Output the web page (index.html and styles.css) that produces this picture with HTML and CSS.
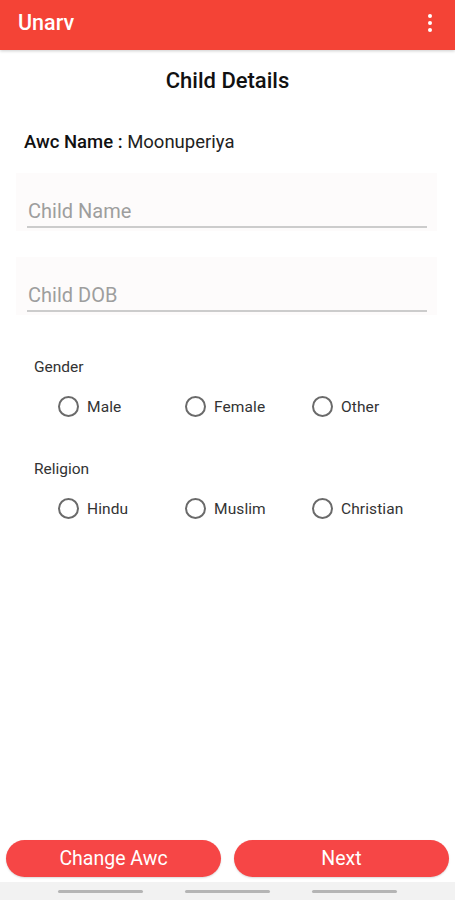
FILE: index.html
```html
<!DOCTYPE html>
<html lang="en">
<head>
    <meta charset="UTF-8">
    <meta name="viewport" content="width=device-width, initial-scale=1.0">
    <title>Unarv</title>
    <link rel="stylesheet" href="styles.css">
</head>
<body>
    <header class="app-bar">
        <h1>Unarv</h1>
        <div class="menu-icon">
            <span></span><span></span><span></span>
        </div>
    </header>
    <main class="content">
        <h2 class="page-title">Child Details</h2>
        <div class="awc-name"><b>Awc Name :</b> Moonuperiya</div>

        <div class="field">
            <input type="text" placeholder="Child Name">
        </div>
        <div class="field">
            <input type="text" placeholder="Child DOB">
        </div>

        <div class="group">
            <div class="group-label">Gender</div>
            <div class="radios">
                <label class="radio"><span class="circle"></span>Male</label>
                <label class="radio"><span class="circle"></span>Female</label>
                <label class="radio"><span class="circle"></span>Other</label>
            </div>
        </div>

        <div class="group">
            <div class="group-label">Religion</div>
            <div class="radios">
                <label class="radio"><span class="circle"></span>Hindu</label>
                <label class="radio"><span class="circle"></span>Muslim</label>
                <label class="radio"><span class="circle"></span>Christian</label>
            </div>
        </div>
    </main>
    <div class="bottom-buttons">
        <button class="btn">Change Awc</button>
        <button class="btn">Next</button>
    </div>
    <div class="nav-bar">
        <span></span><span></span><span></span>
    </div>
</body>
</html>
```

FILE: styles.css
```css
body {
    font-family: Roboto, 'Noto Sans', sans-serif;
    margin: 0;
    padding: 0;
    width: 455px;
    height: 900px;
    background-color: #fff;
    display: flex;
    flex-direction: column;
    overflow: hidden;
}

.app-bar {
    height: 50px;
    background-color: #f44336;
    display: flex;
    justify-content: space-between;
    align-items: center;
    padding: 0 18px;
    box-shadow: 0 1px 3px rgba(0, 0, 0, 0.2);
    flex-shrink: 0;
}

.app-bar h1 {
    color: #fff;
    font-size: 21.5px;
    font-weight: 500;
    margin: 0 0 6px 0;
}

.menu-icon {
    display: flex;
    flex-direction: column;
    gap: 3px;
    margin-right: 5px;
    margin-bottom: 4px;
}

.menu-icon span {
    width: 4px;
    height: 4px;
    background-color: #fff;
    border-radius: 50%;
}

.content {
    flex: 1;
}

.page-title {
    text-align: center;
    font-size: 22px;
    font-weight: 500;
    color: #111;
    margin: 18px 0 0 0;
    line-height: 26px;
}

.awc-name {
    font-size: 18.5px;
    color: #222;
    margin: 37px 0 0 24px;
    line-height: 22px;
}

.awc-name b {
    font-weight: 500;
    color: #111;
}

.field {
    margin: 20px 18px 0 16px;
    height: 58px;
    background-color: #fdfbfb;
    padding: 0 10px 0 11px;
    display: flex;
    align-items: flex-end;
}

.field + .field {
    margin-top: 26px;
}

.field input {
    width: 100%;
    border: none;
    border-bottom: 2px solid #cccccc;
    background: transparent;
    font-family: Roboto, sans-serif;
    font-size: 20px;
    padding: 0 0 3px 1px;
    margin-bottom: 3px;
    outline: none;
}

.field input::placeholder {
    color: #9e9e9e;
}

.group {
    margin: 43px 0 0 34px;
}

.group + .group {
    margin-top: 43px;
}

.group-label {
    font-size: 15.5px;
    color: #333;
    line-height: 18px;
}

.radios {
    display: flex;
    margin: 20px 0 0 24px;
}

.radio {
    width: 127px;
    display: flex;
    align-items: center;
    font-size: 15.5px;
    letter-spacing: 0.1px;
    color: #333;
}

.circle {
    width: 17px;
    height: 17px;
    border: 2px solid #6a6a6a;
    border-radius: 50%;
    margin-right: 8px;
}

.bottom-buttons {
    display: flex;
    gap: 13px;
    padding: 0 6px;
    margin-bottom: 5px;
    flex-shrink: 0;
}

.btn {
    flex: 1;
    height: 37px;
    border: none;
    border-radius: 19px;
    background-color: #f64646;
    color: #fff;
    font-family: Roboto, sans-serif;
    font-size: 19.5px;
    box-shadow: 0 1px 2px rgba(0, 0, 0, 0.15);
}

.nav-bar {
    height: 18px;
    background-color: #f2f2f2;
    display: flex;
    justify-content: center;
    align-items: center;
    gap: 42px;
    flex-shrink: 0;
}

.nav-bar span {
    width: 85px;
    height: 3px;
    background-color: #b5b5b5;
    border-radius: 2px;
}
```
